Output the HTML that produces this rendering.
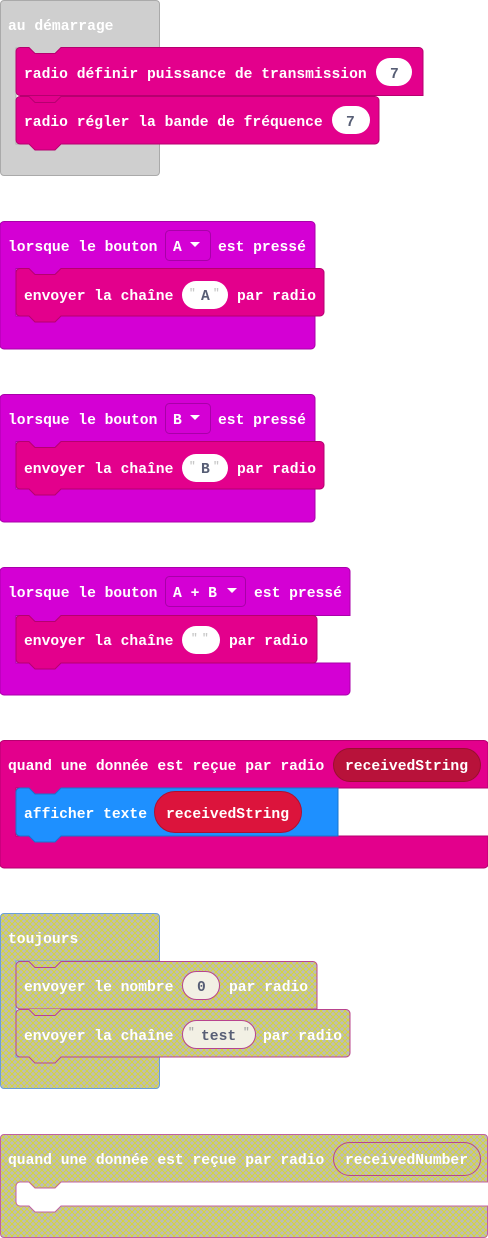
<!DOCTYPE html>
<html><head><meta charset="utf-8"><style>
html,body{margin:0;padding:0;background:#fff;width:488px;height:1238px;overflow:hidden}
svg text{font-family:"Liberation Mono",monospace;font-weight:bold;font-size:14.65px;fill:#fff}
svg text.d{fill:#575e75}
svg text.q{fill:#c8c8c8}
</style></head><body>
<svg width="488" height="1238" xmlns="http://www.w3.org/2000/svg">
<defs>
<pattern id="h" width="6" height="6" patternUnits="userSpaceOnUse">
<rect width="6" height="6" fill="#bdbdb6"/>
<path d="M0,0L6,6M6,0L0,6" stroke="#d8d830" stroke-width="0.9"/>
</pattern>
</defs>

<!-- Block 1 -->
<path d="M4,0.5H156a3.5,3.5 0 0 1 3.5,3.5V48H16V144H159.5V172a3.5,3.5 0 0 1 -3.5,3.5H4a3.5,3.5 0 0 1 -3.5,-3.5V4a3.5,3.5 0 0 1 3.5,-3.5Z" fill="#cfcfcf" stroke="#aaaaaa"/>
<text x="8" y="30">au démarrage</text>
<path d="M28,47l7,7h20l7,-7z" fill="#cfcfcf"/>
<path d="M20,47.5H29l6,6h20l6,-6H419a4,4 0 0 1 4,4V95.5H20a4,4 0 0 1 -4,-4V51.5a4,4 0 0 1 4,-4Z" fill="#e3008c" stroke="#b6006f"/>
<text x="24" y="78">radio définir puissance de transmission</text>
<rect x="376" y="58" width="36" height="28" rx="14" fill="#fff"/>
<text class="d" x="390" y="78">7</text>
<path d="M28,96l7,7h20l7,-7z" fill="#e3008c"/>
<path d="M20,96.5H29l6,6h20l6,-6H375a4,4 0 0 1 4,4V140a4,4 0 0 1 -4,4H61l-6,6H35l-6,-6H20a4,4 0 0 1 -4,-4V100.5a4,4 0 0 1 4,-4Z" fill="#e3008c" stroke="#b6006f"/>
<text x="24" y="126">radio régler la bande de fréquence</text>
<rect x="332" y="106" width="38" height="28" rx="14" fill="#fff"/>
<text class="d" x="346" y="126">7</text>

<!-- Block 2 -->
<path d="M4,221.5H311a4,4 0 0 1 4,4V268.5H16V316H315V345a4,4 0 0 1 -4,4H4a4,4 0 0 1 -4,-4V225.5a4,4 0 0 1 4,-4Z" fill="#d400d4" stroke="#aa00aa"/>
<text x="8" y="251">lorsque le bouton</text>
<rect x="165.5" y="230.5" width="45" height="30" rx="4" fill="#d400d4" stroke="#a800a8"/>
<text x="173" y="251">A</text><path d="M190,242h10l-5,5z" fill="#fff"/>
<text x="218" y="251">est pressé</text>
<path d="M28,268l7,7h20l7,-7z" fill="#d400d4"/>
<path d="M20,268.5H29l6,6h20l6,-6H320a4,4 0 0 1 4,4V312a4,4 0 0 1 -4,4H61l-6,6H35l-6,-6H20a4,4 0 0 1 -4,-4V272.5a4,4 0 0 1 4,-4Z" fill="#e3008c" stroke="#b6006f"/>
<text x="24" y="300">envoyer la chaîne</text>
<rect x="182" y="281" width="46" height="28" rx="14" fill="#fff"/>
<text class="q" x="189" y="296" style="font-size:11px">"</text><text class="d" x="201" y="300">A</text><text class="q" x="213" y="296" style="font-size:11px">"</text>
<text x="237" y="300">par radio</text>

<!-- Block 3 -->
<path d="M4,394.5H311a4,4 0 0 1 4,4V441.5H16V489H315V518a4,4 0 0 1 -4,4H4a4,4 0 0 1 -4,-4V398.5a4,4 0 0 1 4,-4Z" fill="#d400d4" stroke="#aa00aa"/>
<text x="8" y="424">lorsque le bouton</text>
<rect x="165.5" y="403.5" width="45" height="30" rx="4" fill="#d400d4" stroke="#a800a8"/>
<text x="173" y="424">B</text><path d="M190,415h10l-5,5z" fill="#fff"/>
<text x="218" y="424">est pressé</text>
<path d="M28,441l7,7h20l7,-7z" fill="#d400d4"/>
<path d="M20,441.5H29l6,6h20l6,-6H320a4,4 0 0 1 4,4V485a4,4 0 0 1 -4,4H61l-6,6H35l-6,-6H20a4,4 0 0 1 -4,-4V445.5a4,4 0 0 1 4,-4Z" fill="#e3008c" stroke="#b6006f"/>
<text x="24" y="473">envoyer la chaîne</text>
<rect x="182" y="454" width="46" height="28" rx="14" fill="#fff"/>
<text class="q" x="189" y="469" style="font-size:11px">"</text><text class="d" x="201" y="473">B</text><text class="q" x="213" y="469" style="font-size:11px">"</text>
<text x="237" y="473">par radio</text>

<!-- Block 4 -->
<path d="M4,567.5H346a4,4 0 0 1 4,4V615.5H16V663H350V691a4,4 0 0 1 -4,4H4a4,4 0 0 1 -4,-4V571.5a4,4 0 0 1 4,-4Z" fill="#d400d4" stroke="#aa00aa"/>
<text x="8" y="597">lorsque le bouton</text>
<rect x="165.5" y="576.5" width="80" height="30" rx="4" fill="#d400d4" stroke="#a800a8"/>
<text x="173" y="597">A + B</text><path d="M227,588h10l-5,5z" fill="#fff"/>
<text x="254" y="597">est pressé</text>
<path d="M28,615l7,7h20l7,-7z" fill="#d400d4"/>
<path d="M20,615.5H29l6,6h20l6,-6H313a4,4 0 0 1 4,4V659a4,4 0 0 1 -4,4H61l-6,6H35l-6,-6H20a4,4 0 0 1 -4,-4V619.5a4,4 0 0 1 4,-4Z" fill="#e3008c" stroke="#b6006f"/>
<text x="24" y="645">envoyer la chaîne</text>
<rect x="182" y="626" width="38" height="28" rx="14" fill="#fff"/>
<text class="q" x="191" y="641" style="font-size:11px">"</text><text class="q" x="202" y="641" style="font-size:11px">"</text>
<text x="229" y="645">par radio</text>

<!-- Block 5 -->
<path d="M4,740.5H484a4,4 0 0 1 4,4V788H16V836H488V864a4,4 0 0 1 -4,4H4a4,4 0 0 1 -4,-4V744.5a4,4 0 0 1 4,-4Z" fill="#e3008c" stroke="#b6006f"/>
<text x="8" y="770">quand une donnée est reçue par radio</text>
<rect x="333.5" y="748.5" width="147" height="33" rx="16.5" fill="#b8123a" stroke="#9a0e30"/>
<text x="345" y="770">receivedString</text>
<path d="M28,787l7,7h20l7,-7z" fill="#e3008c"/>
<path d="M20,788H29l6,6h20l6,-6H338V836H61l-6,6H35l-6,-6H20a4,4 0 0 1 -4,-4V792a4,4 0 0 1 4,-4Z" fill="#1e90ff" stroke="#1873cc"/>
<text x="24" y="818">afficher texte</text>
<rect x="154.5" y="791.5" width="147" height="41" rx="20.5" fill="#dc143c" stroke="#b0102f"/>
<text x="166" y="818">receivedString</text>

<!-- Block 6 -->
<path d="M4,913.5H156a3.5,3.5 0 0 1 3.5,3.5V961H16V1057H159.5V1085a3.5,3.5 0 0 1 -3.5,3.5H4a3.5,3.5 0 0 1 -3.5,-3.5V917a3.5,3.5 0 0 1 3.5,-3.5Z" fill="url(#h)" stroke="#6a9fd8"/>
<text x="8" y="943">toujours</text>
<path d="M28,961l7,7h20l7,-7z" fill="url(#h)"/>
<path d="M20,961.5H29l6,6h20l6,-6H313a4,4 0 0 1 4,4V1009H20a4,4 0 0 1 -4,-4V965.5a4,4 0 0 1 4,-4Z" fill="url(#h)" stroke="#b8448e"/>
<text x="24" y="991">envoyer le nombre</text>
<rect x="182.5" y="971.5" width="37" height="28" rx="14" fill="#f2f0e4" stroke="#b8448e"/>
<text class="d" x="197" y="991">0</text>
<text x="229" y="991">par radio</text>
<path d="M28,1009l7,7h20l7,-7z" fill="url(#h)"/>
<path d="M20,1009.5H29l6,6h20l6,-6H346a4,4 0 0 1 4,4V1053a4,4 0 0 1 -4,4H61l-6,6H35l-6,-6H20a4,4 0 0 1 -4,-4V1013.5a4,4 0 0 1 4,-4Z" fill="url(#h)" stroke="#b8448e"/>
<text x="24" y="1040">envoyer la chaîne</text>
<rect x="182.5" y="1020.5" width="73" height="28" rx="14" fill="#f2f0e4" stroke="#b8448e"/>
<text class="q" x="188" y="1035" style="font-size:11px;fill:#aaa">"</text><text class="d" x="201" y="1040">test</text><text class="q" x="243" y="1035" style="font-size:11px;fill:#aaa">"</text>
<text x="263" y="1040">par radio</text>

<!-- Block 7 -->
<path d="M4,1134.5H484a3.5,3.5 0 0 1 3.5,3.5V1182H61l-6,6H35l-6,-6H20a4,4 0 0 0 -4,4V1202a4,4 0 0 0 4,4H29l6,6H55l6,-6H487.5V1234a3.5,3.5 0 0 1 -3.5,3.5H4a3.5,3.5 0 0 1 -3.5,-3.5V1138a3.5,3.5 0 0 1 3.5,-3.5Z" fill="url(#h)" stroke="#c060a0"/>
<text x="8" y="1164">quand une donnée est reçue par radio</text>
<rect x="333.5" y="1142.5" width="147" height="33" rx="16.5" fill="url(#h)" stroke="#b8448e"/>
<text x="345" y="1164">receivedNumber</text>
</svg>
</body></html>
